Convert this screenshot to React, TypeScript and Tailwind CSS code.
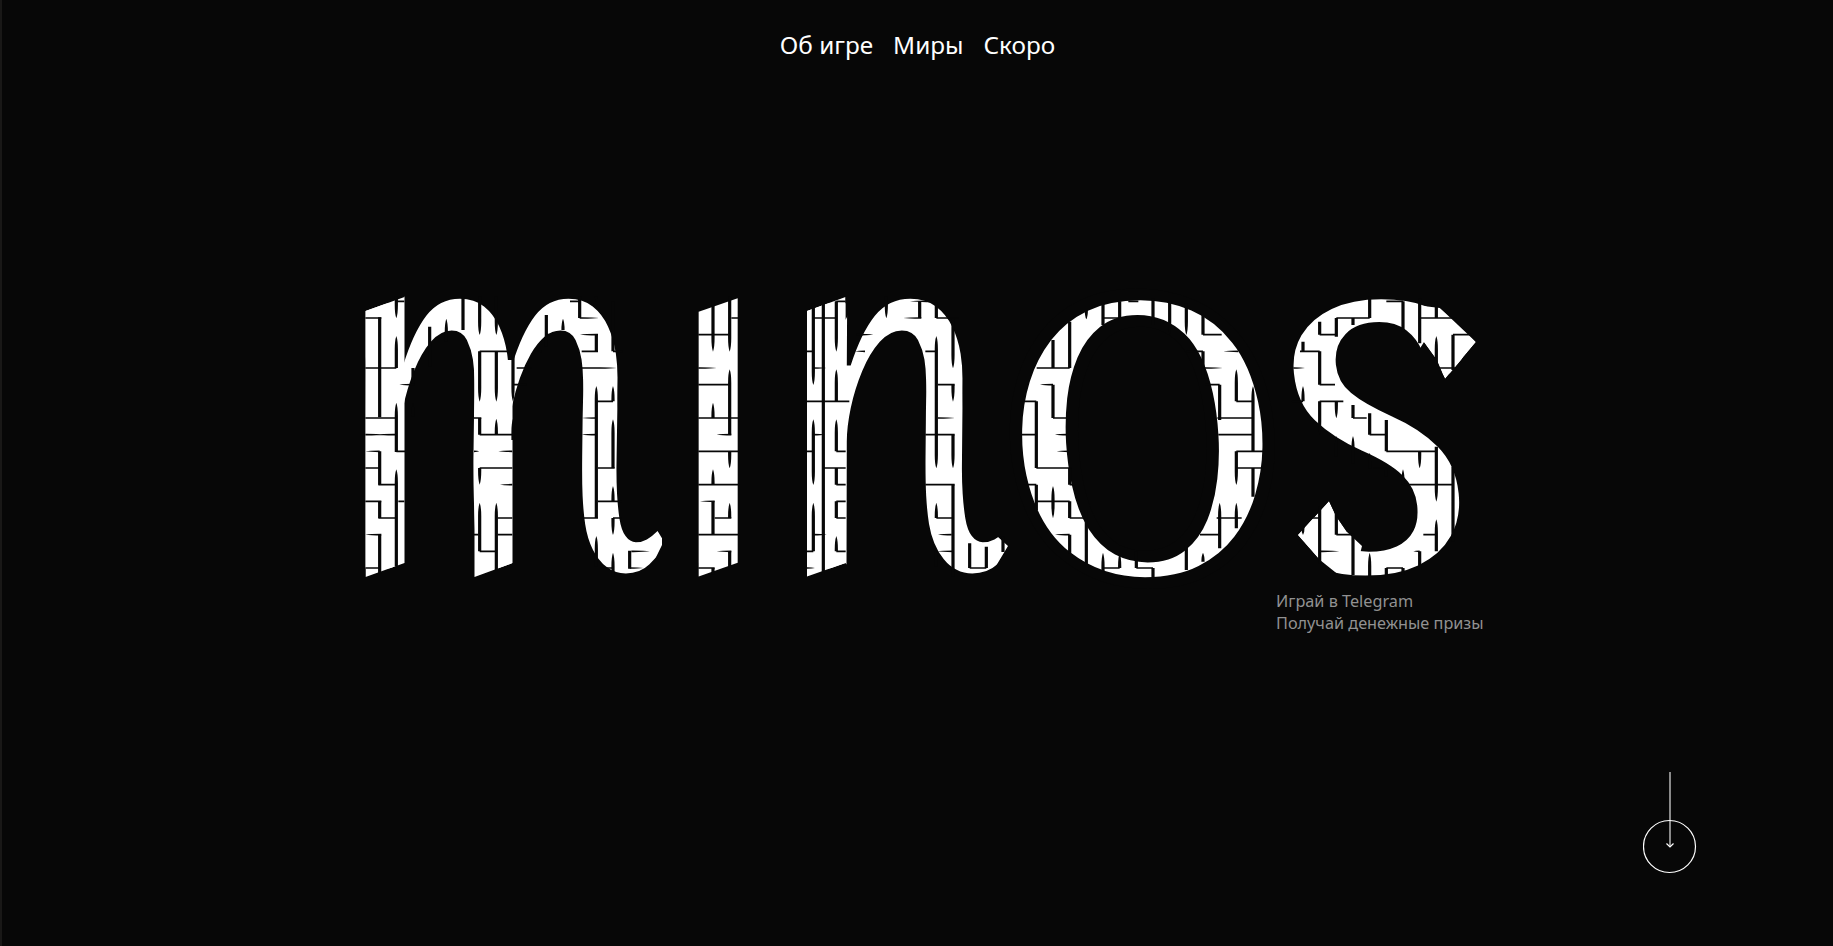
import type { ReactNode } from "react";

const links = ["Об игре", "Миры", "Скоро"];

// Maze walls are described in thirds of a pixel, per block of letters.
// Wall = [line, start, end, taper]; taper: 0 none, 1 at the start, 2 at the end, 3 both.
type Wall = [number, number, number, number?];
type Block = { x: number; v: Wall[]; h: Wall[] };

const blocks: Block[] = [
  {
    x: 350,
    v: [
      [89, 112, 412], [139, 50, 115, 2], [139, 168, 264, 1], [139, 368, 516, 1], [139, 568, 860, 1],
      [89, 514, 614], [89, 664, 714], [89, 764, 880], [189, 264, 314], [189, 368, 410, 1],
      [239, 140, 260], [289, 116, 185, 1], [339, 50, 150], [389, 50, 165, 2], [439, 50, 165, 2],
      [389, 214, 365, 2], [439, 214, 365, 2], [489, 214, 365, 2], [489, 416, 480, 1], [389, 414, 464],
      [439, 416, 464, 1], [389, 564, 614, 2], [389, 668, 814, 1], [439, 668, 870, 1],
    ],
    h: [
      [64, 139, 163], [114, 46, 94], [264, 46, 139], [414, 46, 139], [464, 46, 100, 2], [464, 80, 139, 1],
      [514, 46, 89, 1], [564, 46, 89], [614, 85, 139], [514, 139, 165], [664, 46, 94], [664, 145, 163],
      [714, 85, 139], [764, 46, 94, 1], [864, 46, 89], [314, 148, 193, 1], [214, 389, 489], [414, 372, 394],
      [464, 389, 487], [514, 372, 388, 2], [514, 445, 487, 1], [564, 389, 487], [614, 450, 487, 1],
      [714, 443, 487], [764, 372, 385], [814, 389, 435], [764, 443, 487],
    ],
  },
  {
    x: 500,
    v: [
      [239, 50, 114], [289, 50, 66, 2], [339, 65, 214], [139, 105, 200], [189, 116, 150, 1], [289, 164, 214],
      [289, 318, 714, 1], [339, 318, 364, 1], [339, 418, 564, 1], [339, 618, 664, 1], [339, 714, 765, 2],
      [289, 768, 860, 1], [339, 818, 890, 1], [389, 812, 866],
    ],
    h: [
      [64, 210, 239], [114, 239, 297, 2], [164, 140, 165], [164, 240, 294, 1], [214, 245, 294], [214, 339, 368],
      [264, 50, 95], [314, 42, 80], [264, 245, 350, 2], [364, 289, 339], [414, 245, 289, 1], [464, 245, 289, 1],
      [564, 294, 344], [664, 294, 366], [714, 245, 294], [714, 339, 366], [814, 394, 450, 2], [864, 300, 339],
      [864, 389, 430, 2], [214, 105, 125, 1],
    ],
  },
  {
    x: 680,
    v: [
      [99, 60, 215, 2], [149, 50, 215, 2], [149, 268, 464, 1], [99, 368, 414, 1], [99, 568, 614, 1],
      [149, 514, 565, 2], [99, 664, 764], [149, 668, 714, 1], [149, 814, 864], [99, 864, 884],
      [400, 70, 315, 2], [430, 60, 885], [469, 64, 215, 2], [469, 268, 364, 1], [400, 418, 615, 3],
      [469, 418, 514, 1], [469, 564, 614], [400, 668, 814, 1], [469, 664, 714], [469, 768, 814, 1],
    ],
    h: [
      [114, 154, 174], [164, 55, 149], [264, 55, 110, 2], [314, 55, 149], [414, 55, 174], [464, 110, 154, 1],
      [514, 55, 174], [614, 55, 174], [664, 60, 104, 1], [714, 104, 154], [764, 55, 174], [814, 110, 154, 1],
      [864, 55, 104], [64, 469, 497], [114, 400, 469], [214, 381, 400], [264, 400, 440, 2], [364, 381, 430],
      [364, 430, 508], [464, 400, 435, 2], [514, 381, 400], [514, 469, 497], [564, 430, 497], [614, 469, 497],
      [664, 469, 497], [714, 469, 497], [764, 400, 440, 2], [814, 381, 400], [814, 469, 497], [864, 381, 405, 2],
    ],
  },
  {
    x: 850,
    v: [
      [109, 50, 115, 2], [209, 64, 114], [259, 64, 114], [309, 114, 265, 2], [259, 168, 565, 3],
      [309, 314, 365, 2], [309, 464, 565, 2], [309, 614, 890], [259, 668, 714, 1], [259, 814, 860],
      [359, 790, 864], [409, 800, 864], [459, 770, 816],
    ],
    h: [
      [64, 180, 259, 1], [114, 160, 214, 1], [114, 259, 325], [164, 20, 70, 2], [214, 15, 45, 1], [214, 226, 255],
      [314, 264, 314], [414, 264, 315, 2], [464, 226, 314], [614, 226, 314], [714, 259, 309], [764, 264, 305, 1],
      [814, 259, 309, 1], [864, 359, 409],
    ],
  },
  {
    x: 1010,
    v: [
      [79, 364, 564], [129, 180, 264], [179, 125, 264], [129, 314, 414], [279, 70, 135], [329, 64, 114],
      [429, 56, 135], [479, 60, 165, 2], [529, 70, 165, 2], [579, 105, 164], [579, 214, 295], [629, 314, 420],
      [679, 268, 364, 1], [729, 318, 514, 1], [679, 514, 615, 2], [729, 564, 650], [79, 614, 690],
      [129, 618, 715, 3], [179, 564, 614], [179, 664, 714], [229, 690, 855], [179, 764, 820], [279, 818, 875, 1],
      [329, 818, 864, 1], [379, 815, 864], [429, 864, 892], [529, 795, 870], [579, 818, 845, 1],
      [629, 668, 805, 1], [679, 668, 745, 1], [229, 90, 118, 2],
    ],
    h: [
      [64, 355, 385], [114, 279, 329], [264, 80, 179], [314, 90, 129, 1], [364, 45, 79], [414, 129, 170],
      [464, 36, 79], [464, 135, 170, 1], [514, 140, 176, 1], [564, 79, 184], [614, 50, 79], [664, 79, 179],
      [714, 179, 229], [764, 135, 179, 1], [614, 179, 195], [864, 279, 329], [864, 379, 429], [164, 579, 635],
      [214, 530, 579], [214, 640, 685, 1], [264, 579, 638, 2], [314, 585, 629], [364, 679, 729],
      [414, 622, 729], [464, 625, 729], [514, 679, 760], [564, 679, 755], [714, 620, 695], [764, 570, 629],
    ],
  },
  {
    x: 1270,
    v: [
      [149, 125, 164], [199, 114, 170], [249, 114, 135], [299, 50, 114], [399, 64, 155], [449, 55, 190],
      [499, 65, 114], [499, 168, 250, 1], [549, 164, 270], [99, 185, 214], [149, 214, 314], [99, 318, 364, 1],
      [149, 364, 465, 2], [199, 364, 415, 2], [249, 375, 414], [299, 400, 464], [349, 420, 514],
      [199, 468, 530, 1], [249, 468, 550, 1], [299, 518, 565, 1], [449, 514, 565, 2], [499, 500, 665, 2],
      [399, 568, 614, 1], [349, 564, 590], [549, 560, 785], [499, 718, 814, 1], [149, 680, 850],
      [199, 690, 764], [249, 760, 885], [299, 818, 892, 1], [449, 814, 870], [349, 864, 890], [399, 864, 885],
      [99, 740, 765, 2],
    ],
    h: [
      [64, 349, 399], [114, 199, 299], [114, 449, 560], [164, 149, 199], [164, 549, 610], [214, 90, 149],
      [264, 70, 105, 2], [264, 505, 560], [314, 149, 195], [364, 66, 99], [364, 149, 220], [414, 249, 290],
      [464, 299, 349], [514, 349, 499], [564, 310, 349], [614, 399, 549], [714, 125, 149], [764, 199, 249],
      [764, 460, 499], [814, 430, 449, 1], [814, 149, 208, 2], [864, 349, 399],
    ],
  },
];

// A wall drawn along its own axis; tapered ends narrow to a point.
function wall([line, a, b, taper = 0]: Wall, half: number, reach: number, vertical: boolean) {
  const cap = Math.min(reach, (b - a) / (taper === 3 ? 2 : 1));
  const from = taper & 1 ? cap : 0;
  const to = taper & 2 ? cap : 0;
  const p = (along: number, off: number) => (vertical ? `${line + off} ${along}` : `${along} ${line + off}`);
  return (
    `M${p(a, from ? 0 : -half)}` +
    (from ? `Q${p(a + from / 3, -half)} ${p(a + from, -half)}` : "") +
    `L${p(b - to, -half)}` +
    (to ? `Q${p(b - to / 3, -half)} ${p(b, 0)}Q${p(b - to / 3, half)} ${p(b - to, half)}` : `L${p(b, half)}`) +
    `L${p(a + from, half)}` +
    (from ? `Q${p(a + from / 3, half)} ${p(a, 0)}` : `L${p(a, half)}`) +
    "Z"
  );
}

function Letter({ clip, matrix, children, extra }: { clip: string; matrix: string; children: string; extra?: ReactNode }) {
  return (
    <g clipPath={`url(#cut-${clip})`}>
      <text transform={matrix} fontFamily="'Noto Serif', serif" fontStyle="italic" fontSize="300">
        {children}
      </text>
      {extra}
    </g>
  );
}

function Wordmark() {
  return (
    <svg
      className="ml-[363px] block h-[282px] w-[1116px] overflow-visible"
      viewBox="365 296 1116 282"
      role="img"
      aria-label="minos"
    >
      <defs>
        <clipPath id="cut-m">
          <polygon points="365.500,311 404.500,297 410,280 662,280 662,545 640,590 520,590 520,560.300 474.500,577 404.500,563 365.500,577" />
        </clipPath>
        <clipPath id="cut-n">
          <polygon points="807,311 845.500,297 845.500,320 860,290 1000,280 998,537 1008,546 996,566 985,590 870,590 845.500,563 807,576.500" />
        </clipPath>
        <clipPath id="cut-s">
          <polygon points="1280,290 1412,290 1440,308 1460,325 1476,342 1445,379 1437,360 1424,342 1400,380 1490,420 1490,580 1345,580 1320,560 1298,535 1329,501 1336,516 1347,532 1365,500 1329,475 1280,460" />
        </clipPath>
      </defs>
      <g fill="#fff">
        <Letter
          clip="m"
          matrix="matrix(1.22 0 0.245 1.65 348 568.5)"
          extra={
            <>
              <rect x="365.500" y="296" width="39" height="282" />
              <rect x="474.500" y="360" width="38" height="218" />
            </>
          }
        >
          m
        </Letter>
        <g transform="matrix(1 -0.35 0 1 0 0)">
          <text transform="matrix(1.48 0 0 1.67 656.6 821)" fontFamily="'Liberation Sans', sans-serif" fontSize="300">
            ı
          </text>
        </g>
        <Letter
          clip="n"
          matrix="matrix(1.29 0 0.268 1.65 793.5 568.5)"
          extra={<rect x="807" y="296" width="38.500" height="282" />}
        >
          n
        </Letter>
        <text
          transform="matrix(1.775 0 0.38 1.731 1020 577.9)"
          fontFamily="'Noto Serif', serif"
          fontStyle="italic"
          fontSize="300"
          stroke="#070707"
          strokeWidth="6.800"
        >
          o
        </text>
        <Letter
          clip="s"
          matrix="matrix(1.64 0 0.175 1.66 1271.5 570.600)"
          extra={
            <>
              <polygon points="1415,305 1440,308 1476,342 1445,379 1437,360 1424,342" />
              <polygon points="1298,535 1329,501 1336,516 1347,532 1362,546 1355,574 1320,560" />
            </>
          }
        >
          s
        </Letter>
      </g>
      <g fill="#070707">
        {blocks.map((b) => (
          <g key={b.x} transform={`translate(${b.x} 280) scale(0.33333)`}>
            <path d={b.v.map((w) => wall(w, 4.8, 40, true)).join("")} />
            <path d={b.h.map((w) => wall(w, 2.4, 50, false)).join("")} />
          </g>
        ))}
      </g>
    </svg>
  );
}

export default function App() {
  return (
    <main className="flex h-[946px] w-full flex-col overflow-hidden border-l-2 border-[#191817] bg-[#070707] font-['Noto_Sans',sans-serif]">
      <nav className="flex justify-center gap-5 pt-[29px] text-[24.32px] leading-8 text-white">
        {links.map((label) => (
          <a key={label} href="#">
            {label}
          </a>
        ))}
      </nav>
      <section className="mt-[235px]">
        <Wordmark />
        <p className="mt-3 ml-[1274px] text-[16.25px] leading-[22px] text-[#919191]">
          Играй в Telegram
          <br />
          Получай денежные призы
        </p>
      </section>
      <a href="#" aria-label="Вниз" className="mt-[138px] mr-[136px] self-end">
        <svg width="54" height="102" viewBox="0 0 54 102" fill="none" className="block">
          <rect x="26" y="0" width="2" height="75" fill="#8a8a8a" />
          <circle cx="26.500" cy="74.500" r="26" stroke="#fff" strokeWidth="1.200" />
          <path d="M23.500 71.500L27 75L30.500 71.500" stroke="#fff" strokeWidth="1.200" />
        </svg>
      </a>
    </main>
  );
}
